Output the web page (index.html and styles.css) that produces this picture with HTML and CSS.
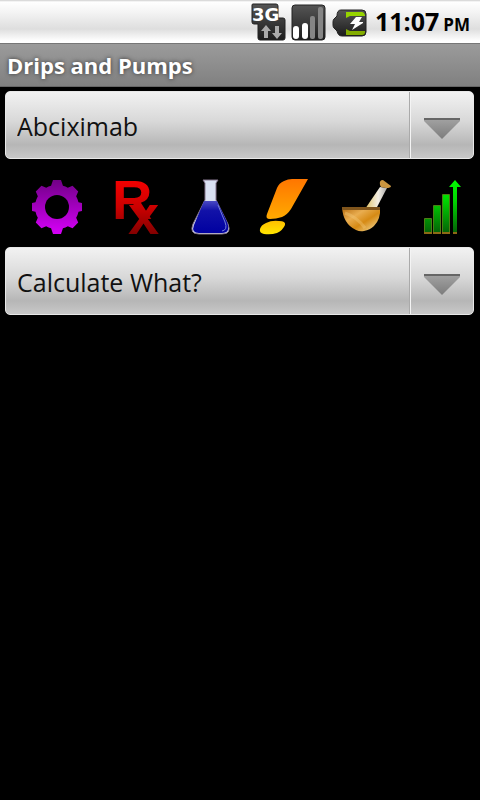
FILE: index.html
```html
<!DOCTYPE html>
<html lang="en">
<head>
  <meta charset="UTF-8">
  <meta name="viewport" content="width=device-width, initial-scale=1.0">
  <title>Drips and Pumps</title>
  <link rel="stylesheet" href="styles.css">
</head>
<body>

  <div class="status-bar">
    <svg class="status-icon" width="36" height="40" viewBox="0 0 36 40">
      <defs>
        <linearGradient id="dark" x1="0" y1="0" x2="0" y2="1">
          <stop offset="0" stop-color="#555"/>
          <stop offset="1" stop-color="#1c1c1c"/>
        </linearGradient>
      </defs>
      <path d="M3 2h23q2 0 2 2v12h5q2 0 2 2v18q0 2-2 2H10q-2 0-2-2V22H4q-2 0-2-2V3q0-1 1-1z" fill="url(#dark)" stroke="#222"/>
      <text class="net" x="2" y="19">3G</text>
      <path d="M16 23l5 6h-3v7h-4v-7h-3zM27 37l-5-6h3v-7h4v7h3z" fill="#aaa"/>
    </svg>
    <svg class="status-icon" width="36" height="40" viewBox="0 0 36 40">
      <rect x="1" y="3" width="33" height="35" rx="3" fill="url(#dark)" stroke="#222"/>
      <rect x="2" y="24" width="6" height="13" rx="3" fill="#fff"/>
      <rect x="11" y="21" width="6" height="16" rx="3" fill="#fff"/>
      <rect x="19" y="14" width="5" height="23" rx="2" fill="#858585"/>
      <rect x="27" y="5" width="5" height="32" rx="2" fill="#858585"/>
    </svg>
    <svg class="status-icon" width="36" height="40" viewBox="0 0 36 40">
      <path d="M9 8h21q4 0 4 4v18q0 4-4 4H10q-4 0-5-5L2 26q-1-1-1-3v-3q0-2 1-3l3-3q0-6 4-6z" fill="url(#dark)" stroke="#222"/>
      <path d="M14 10h16q2 0 3 3v1H18l-4 2z" fill="#96d400"/>
      <path d="M14 27l4 2h15v1q0 3-3 3H14z" fill="#83ac00"/>
      <path d="M24 15h6l-3 5h4v1l-11 7 3-6h-5z" fill="#fff"/>
    </svg>
    <span class="clock">11:07<span class="ampm">PM</span></span>
  </div>

  <h1 class="title-bar">Drips and Pumps</h1>

  <main class="content">
    <div class="spinner">
      <select class="spinner-select" id="drug" aria-label="Drug">
        <option>Abciximab</option>
      </select>
      <svg class="spinner-arrow" width="36" height="22" viewBox="0 0 36 22">
        <defs>
          <linearGradient id="arrow" x1="0" y1="0" x2="0" y2="1">
            <stop offset="0" stop-color="#a2a2a2"/>
            <stop offset="1" stop-color="#7c7c7c"/>
          </linearGradient>
        </defs>
        <path d="M0 1h36v2L18 21 0 3z" fill="url(#arrow)"/>
        <path d="M0 0h36v2H0z" fill="#666"/>
      </svg>
    </div>

    <div class="toolbar">
      <button class="tool" type="button" aria-label="Mechanism">
        <svg width="72" height="60" viewBox="0 0 72 60">
          <defs>
            <linearGradient id="purple" x1="0" y1="0" x2="0" y2="1">
              <stop offset="0" stop-color="#6f0084"/>
              <stop offset="1" stop-color="#d800fa"/>
            </linearGradient>
            <clipPath id="gear">
              <circle cx="36" cy="30" r="22"/>
              <path d="M32 3h8l2 6v42l-2 6h-8l-2-6V9z"/>
              <path d="M32 4h8l2 5v42l-2 5h-8l-2-5V9z" transform="rotate(45 36 30)"/>
              <path d="M32 5h8l1 5v40l-1 5h-8l-1-5V10z" transform="rotate(90 36 30)"/>
              <path d="M32 4h8l2 5v42l-2 5h-8l-2-5V9z" transform="rotate(135 36 30)"/>
            </clipPath>
          </defs>
          <rect x="8" y="2" width="56" height="56" fill="url(#purple)" clip-path="url(#gear)"/>
          <circle cx="36" cy="30" r="12" fill="#000"/>
        </svg>
      </button>

      <button class="tool" type="button" aria-label="Dosing">
        <svg width="72" height="60" viewBox="0 0 72 60">
          <defs>
            <linearGradient id="red" gradientUnits="userSpaceOnUse" x1="0" y1="2" x2="0" y2="58">
              <stop offset="0" stop-color="#f60000"/>
              <stop offset=".5" stop-color="#cc0000"/>
              <stop offset="1" stop-color="#800000"/>
            </linearGradient>
          </defs>
          <text class="rx" x="14" y="42" fill="url(#red)">R<tspan x="30" y="57">x</tspan></text>
        </svg>
      </button>

      <button class="tool" type="button" aria-label="Preparation">
        <svg width="72" height="60" viewBox="0 0 72 60">
          <defs>
            <linearGradient id="blue" x1="0" y1="0" x2="0" y2="1">
              <stop offset="0" stop-color="#4a4ac4"/>
              <stop offset=".3" stop-color="#1212a8"/>
              <stop offset="1" stop-color="#0000a0"/>
            </linearGradient>
          </defs>
          <path d="M28 3h15l-2 3v17l12 24q4 10-6 10H24q-10 0-6-10l12-24V6z" fill="#d9e0f2" stroke="#84748c"/>
          <path d="M29 24h13l10 21q4 11-5 11H24q-8 0-5-8z" fill="url(#blue)"/>
          <path d="M43 28l7 17q3 8-3 9" fill="none" stroke="#7480d8"/>
        </svg>
      </button>

      <button class="tool" type="button" aria-label="Warnings">
        <svg width="72" height="60" viewBox="0 0 72 60">
          <defs>
            <linearGradient id="orange" x1="0" y1="0" x2="0" y2="1">
              <stop offset="0" stop-color="#ff7600"/>
              <stop offset="1" stop-color="#ffaa00"/>
            </linearGradient>
            <linearGradient id="yellow" x1="0" y1="0" x2="0" y2="1">
              <stop offset="0" stop-color="#ffbf00"/>
              <stop offset="1" stop-color="#ffe600"/>
            </linearGradient>
          </defs>
          <path d="M56 2L39 32q-4 6-9 8-6 2-12 2-5 0-3-5l10-26q2-5 7-7 4-2 8-2z" fill="url(#orange)"/>
          <path d="M8 52q1-4 6-6 6-3 13-2 7 0 6 4-2 5-8 8-6 2-13 1-5-1-4-5z" fill="url(#yellow)"/>
        </svg>
      </button>

      <button class="tool" type="button" aria-label="Pharmacology">
        <svg width="72" height="60" viewBox="0 0 72 60">
          <defs>
            <linearGradient id="bowl" x1="0" y1="0" x2="1" y2="1">
              <stop offset="0" stop-color="#b4690c"/>
              <stop offset=".35" stop-color="#e9ad50"/>
              <stop offset=".6" stop-color="#d68a14"/>
              <stop offset="1" stop-color="#f5e2a8"/>
            </linearGradient>
            <linearGradient id="pestle" x1="0" y1="0" x2="1" y2="0">
              <stop offset="0" stop-color="#e0c265"/>
              <stop offset=".6" stop-color="#f4efe4"/>
              <stop offset="1" stop-color="#aaa"/>
            </linearGradient>
          </defs>
          <path d="M36 32L51 10l7 1-11 21z" fill="url(#pestle)"/>
          <path d="M51 8q-1-5 3-5l8 6q0 2-5 2l-5-1z" fill="#cb9640"/>
          <path d="M13 30h38q1 12-6 19-4 4-10 5-4 1-8-1-13-6-14-23z" fill="url(#bowl)"/>
          <path d="M16 36q12 4 20 15" fill="none" stroke="#f2c878" stroke-opacity=".4" stroke-width="3"/>
          <path d="M13 30h38v3H13z" fill="#80551c"/>
        </svg>
      </button>

      <button class="tool" type="button" aria-label="Monitoring">
        <svg width="72" height="60" viewBox="0 0 72 60">
          <defs>
            <linearGradient id="green" gradientUnits="userSpaceOnUse" x1="0" y1="2" x2="0" y2="57">
              <stop offset="0" stop-color="#00ff00"/>
              <stop offset=".4" stop-color="#00d400"/>
              <stop offset="1" stop-color="#045c08"/>
            </linearGradient>
          </defs>
          <g fill="url(#green)" stroke="#4d7d14">
            <path d="M18.500 41.500h7v15h-7zM27.500 28.500h7v28h-7zM36.500 17.500h7v39h-7z"/>
          </g>
          <path d="M49 3l6 7h-4v47h-4V10h-4z" fill="url(#green)"/>
          <path d="M18 56h8M27 56h8M36 56h8M47 56h4" stroke="#8c6a14" stroke-width="2"/>
        </svg>
      </button>
    </div>

    <div class="spinner">
      <select class="spinner-select" id="calculate" aria-label="Calculate">
        <option>Calculate What?</option>
      </select>
      <svg class="spinner-arrow" width="36" height="22" viewBox="0 0 36 22">
        <path d="M0 1h36v2L18 21 0 3z" fill="url(#arrow)"/>
        <path d="M0 0h36v2H0z" fill="#666"/>
      </svg>
    </div>
  </main>

</body>
</html>
```
FILE: styles.css
```css
* {
  box-sizing: border-box;
}
body {
  margin: 0;
  background-color: #000;
  font-family: "Open Sans", "Noto Sans", sans-serif;
}
.status-bar {
  display: flex;
  justify-content: flex-end;
  align-items: center;
  gap: 5px;
  height: 43px;
  padding-right: 10px;
  background: linear-gradient(#cfcfcf 0, #fff 2px, #f4f4f4 12px, #dedede 29px, #fff 41px);
}
.status-icon {
  flex: none;
}
.net {
  font-family: "DejaVu Sans", sans-serif;
  font-size: 18px;
  font-weight: bold;
  fill: #fff;
}
.clock {
  display: flex;
  align-items: baseline;
  gap: 4px;
  margin-left: 2px;
  padding-top: 3px;
  font-size: 25px;
  font-weight: bold;
  line-height: 40px;
  color: #000;
}
.ampm {
  font-size: 17px;
}
.title-bar {
  height: 44px;
  margin: 0;
  padding-left: 7px;
  border-top: 1px solid #777;
  border-bottom: 1px solid #666;
  background: linear-gradient(#9b9b9b, #808080);
  font-size: 22px;
  font-weight: bold;
  line-height: 42px;
  color: #fff;
  text-shadow: 0 0 4px #333;
}
.content {
  padding: 4px 6px 4px 5px;
}
.spinner {
  position: relative;
}
.spinner-select {
  display: block;
  appearance: none;
  width: 100%;
  height: 68px;
  padding: 2px 76px 0 11px;
  border: 1px solid #e8e8e8;
  border-radius: 5px;
  background:
    linear-gradient(to right, #aaa 1px, #f4f4f4 1px) right 62px top 0 / 2px 100% no-repeat,
    linear-gradient(#f2f2f2, #d8d8d8 45%, #b6b6b6 80%, #c8c8c8);
  font-family: inherit;
  font-size: 25px;
  color: #111;
}
.spinner-arrow {
  position: absolute;
  top: 27px;
  right: 14px;
  pointer-events: none;
}
.toolbar {
  display: flex;
  height: 88px;
  margin-right: -6px;
  padding-left: 14px;
}
.tool {
  display: flex;
  flex: 1;
  justify-content: center;
  align-items: center;
  min-width: 0;
  padding: 7px 0 0;
  border: 0;
  background: none;
  cursor: pointer;
}
.tool svg {
  flex: none;
  overflow: visible;
}
.rx {
  font-family: "Liberation Sans", Arial, sans-serif;
  font-size: 56px;
  font-weight: bold;
}
```
